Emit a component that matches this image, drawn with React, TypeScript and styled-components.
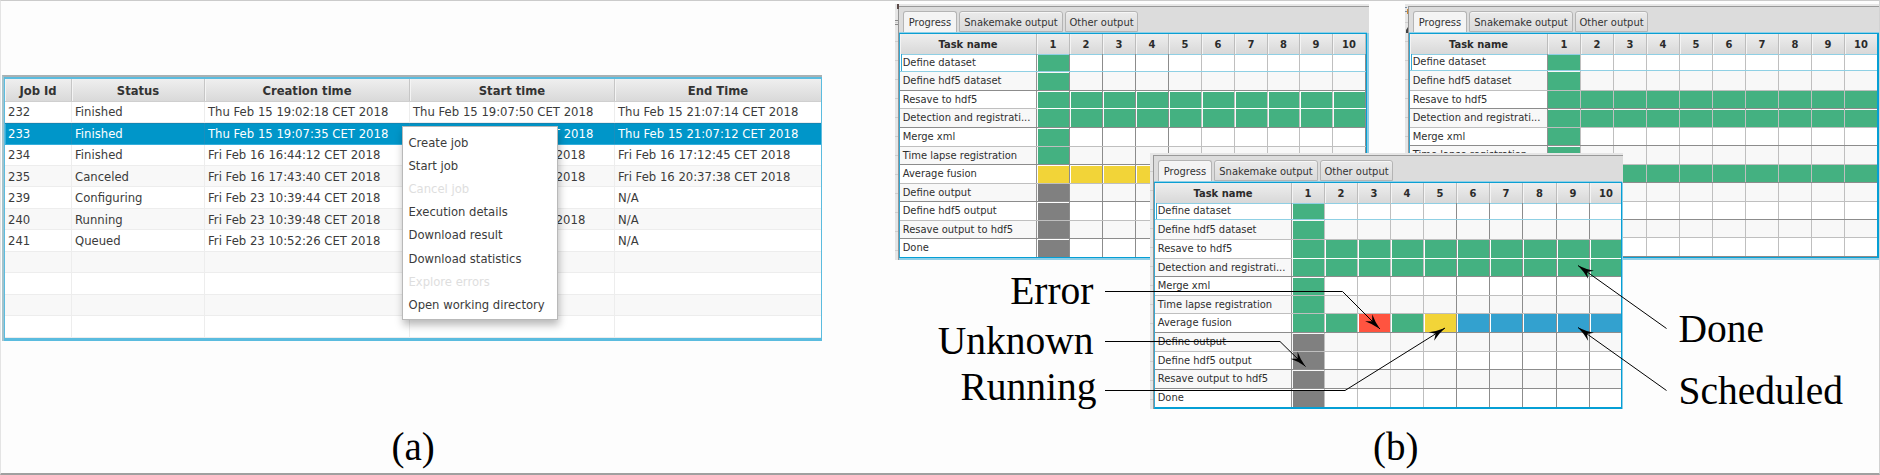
import React from "react";
import styled, { createGlobalStyle, css } from "styled-components";

const GlobalStyle = createGlobalStyle`
  * { box-sizing: border-box; }
  body { margin: 0; background: #fdfdfd; }
`;

const Figure = styled.main`
  display: flex;
  width: 1880px;
  height: 475px;
  overflow: hidden;
  background: #fdfdfd;
  border-top: 1px solid #cbcbcb;
  border-left: 1px solid #e4e4e4;
  border-right: 1px solid #d2d2d2;
  border-bottom: 2px solid #a0a0a0;
  font-family: "DejaVu Sans", Verdana, sans-serif;
  color: #333;
`;

const JobPanel = styled.section`
  position: relative;
  display: flex;
  flex-direction: column;
  width: 824px;
  flex: none;
  padding: 74px 0 0 1px;
`;

const Caption = styled.div<{ $x: number }>`
  margin-top: auto;
  padding-left: ${(p) => p.$x}px;
  height: 48px;
  font: 39px/44px "Liberation Serif", "Times New Roman", serif;
  color: #000;
`;

/* ---------- job table ---------- */

const JobTable = styled.div`
  width: 820px;
  height: 266px;
  border-top: 2px solid #a9b1b3;
  border-left: 2px solid #a3c3cc;
`;

const JobFrame = styled.div`
  height: 264px;
  border: solid #5bbcdf;
  border-width: 2px 1px 3px 1px;
  background: #fff;
  overflow: hidden;
`;

const jobColumns = css`
  display: grid;
  grid-template-columns: 67px 133px 205px 205px 1fr;
`;

const JobHeader = styled.div`
  ${jobColumns}
  height: 22.7px;
  background: linear-gradient(#efefef, #d9d9d9);
  border-bottom: 1px solid #cfcfcf;
  font-size: 11.6px;
  font-weight: bold;
`;

const JobHeading = styled.div`
  display: flex;
  align-items: center;
  justify-content: center;
  border-right: 1px solid #c6c6c6;
  box-shadow: inset 1px 0 #f4f4f4;
  padding-top: 3px;
  &:last-child { border-right: 0; }
`;

const JobRow = styled.div<{ $odd: boolean; $selected: boolean }>`
  ${jobColumns}
  height: 21.45px;
  font-size: 11.65px;
  white-space: pre;
  color: ${(p) => (p.$selected ? "#fff" : "#3b3b3b")};
  background: ${(p) => (p.$selected ? "#0096c9" : p.$odd ? "#f8f8f8" : "#fff")};
  border-bottom: 1px solid ${(p) => (p.$selected ? "#35aedb" : "#ededed")};
  box-shadow: ${(p) => (p.$selected ? "inset 0 1px #1286b4, inset 1px 0 #35aedb" : "none")};
`;

const JobCell = styled.div<{ $selected: boolean }>`
  display: flex;
  align-items: center;
  padding: 1px 0 0 3px;
  border-right: 1px solid ${(p) => (p.$selected ? "#1a8fbd" : "#ededed")};
  &:last-child { border-right: 0; }
`;

const Menu = styled.div`
  position: absolute;
  left: 401px;
  top: 125px;
  width: 156px;
  height: 194px;
  padding: 4px 0 0 5.5px;
  background: #fff;
  border: 1px solid #b9b9b9;
  box-shadow: 1px 5px 8px rgba(0, 0, 0, 0.28);
`;

const MenuItem = styled.div<{ $disabled?: boolean }>`
  display: flex;
  align-items: center;
  height: 23.2px;
  font-size: 11.6px;
  white-space: nowrap;
  color: ${(p) => (p.$disabled ? "#dedede" : "#3b3b3b")};
`;

/* ---------- progress windows ---------- */

const Canvas = styled.section`
  position: relative;
  display: flex;
  flex-direction: column;
  flex: 1;
`;

const Window = styled.div<{ $x: number; $y: number; $w: number }>`
  position: absolute;
  left: ${(p) => p.$x - 825}px;
  top: ${(p) => p.$y - 1}px;
  width: ${(p) => p.$w}px;
  height: 256px;
  padding-left: 3px;
  padding-top: 2px;
  background: repeating-linear-gradient(#e6e6e6 0 18px, #cfcfcf 18px 19px);
  background-color: #e6e6e6;
`;

const Chrome = styled.div`
  height: 254px;
  border-left: 1px solid #969696;
  border-top: 1px solid #999;
  background: #dcdcdc;
  display: flex;
  flex-direction: column;
`;

const Tabs = styled.div`
  display: flex;
  align-items: flex-end;
  gap: 2px;
  height: 26px;
  padding: 0 0 1px 4px;
`;

const Tab = styled.div<{ $w: number; $active?: boolean }>`
  display: flex;
  align-items: center;
  justify-content: center;
  width: ${(p) => p.$w}px;
  height: 21px;
  padding-top: 1px;
  font-size: 9.95px;
  white-space: nowrap;
  color: #333;
  border: 1px solid #b4b4b4;
  border-bottom: ${(p) => (p.$active ? "0" : "1px solid #b4b4b4")};
  border-radius: 3px 3px 0 0;
  background: ${(p) => (p.$active ? "#f4f4f4" : "linear-gradient(#ebebeb, #dadada)")};
  box-shadow: inset 0 1px #f6f6f6;
`;

type RightEdge = "soft" | "flat" | "thin";

const Grid = styled.div<{ $right: RightEdge; $deepBottom: boolean }>`
  flex: 1;
  overflow: hidden;
  background: #fff;
  border-top: 1px solid #0b9fd3;
  border-left: 1px solid #35a8d3;
  border-bottom: ${(p) => (p.$deepBottom ? 2 : 1)}px solid #059fd5;
  border-right: ${(p) => (p.$right === "flat" ? 2 : 1)}px solid #059fd5;
  box-shadow: 0 -1px #8fcfe6;
`;

const Edge = styled.div<{ $right: RightEdge; $deepBottom: boolean }>`
  flex: 1;
  display: flex;
  min-height: 0;
  border-right: ${(p) => (p.$right === "soft" ? 2 : p.$right === "thin" ? 1 : 0)}px solid #8fcfe8;
  border-bottom: ${(p) => (p.$deepBottom ? 0 : 2)}px solid #8fcfe8;
`;

const HeadRow = styled.div`
  display: flex;
  height: 20px;
  background: linear-gradient(#eee, #d8d8d8);
  font-size: 9.95px;
  font-weight: bold;
  color: #2b2b2b;
`;

const HeadCell = styled.div<{ $w: number }>`
  display: flex;
  flex: none;
  align-items: center;
  justify-content: center;
  width: ${(p) => p.$w}px;
  border-right: 1px solid #bcbcbc;
  box-shadow: inset 1px 0 #f4f4f4;
`;

const TaskRow = styled.div<{ $h: number; $line: string; $odd: boolean; $focus: boolean }>`
  display: flex;
  height: ${(p) => p.$h}px;
  background: ${(p) => (p.$odd ? "#f8f8f8" : "#fff")};
  border-bottom: 1px solid ${(p) => p.$line};
  box-shadow: ${(p) => (p.$focus ? "inset 0 1px #8fcfe4" : "none")};
`;

const TaskName = styled.div<{ $w: number; $focus: boolean }>`
  display: flex;
  flex: none;
  align-items: center;
  width: ${(p) => p.$w}px;
  padding: 0 0 0 2.7px;
  font-size: 9.95px;
  line-height: 12px;
  white-space: nowrap;
  color: #2e2e2e;
  border-right: 1px solid #929292;
  box-shadow: ${(p) => (p.$focus ? "inset 1px 0 #fff, inset 2px 0 #35a8d3" : "none")};
`;

const Cell = styled.div<{ $w: number; $line: string; $fill?: string; $top: boolean; $left: boolean; $under: boolean }>`
  flex: none;
  width: ${(p) => p.$w}px;
  border-right: 1px solid ${(p) => p.$line};
  padding: ${(p) => (p.$top ? 1 : 0)}px 0 0 ${(p) => (p.$left ? 1 : 0)}px;
  background: ${(p) => p.$fill || "transparent"} content-box;
  box-shadow: ${(p) => (p.$under ? "0 1px #fff" : "none")};
`;

const Notes = styled.svg`
  position: absolute;
  left: -825px;
  top: -1px;
  width: 1880px;
  height: 475px;
  pointer-events: none;
`;

const Note = styled.div<{ $x: number; $base: number; $end?: boolean }>`
  position: absolute;
  top: ${(p) => p.$base - 36}px;
  ${(p) => (p.$end ? `right: ${1879 - p.$x}px;` : `left: ${p.$x - 825}px;`)}
  font: 39.5px/44px "Liberation Serif", "Times New Roman", serif;
  color: #000;
`;

const D = "#8c8c8c";
const L = "#bfbfbf";
const B = "#8fd0e4";
const G = "#44b181";
const Y = "#f2d438";
const R = "#ff5440";
const S = "#33a1cf";
const U = "#808080";

const jobs = [
  ["232", "Finished", "Thu Feb 15 19:02:18 CET 2018", "Thu Feb 15 19:07:50 CET 2018", "Thu Feb 15 21:07:14 CET 2018"],
  ["233", "Finished", "Thu Feb 15 19:07:35 CET 2018", "Thu Feb 15 19:07:52 CET 2018", "Thu Feb 15 21:07:12 CET 2018"],
  ["234", "Finished", "Fri Feb 16 16:44:12 CET 2018", "Fri Feb 16 16:44:30 CET 2018", "Fri Feb 16 17:12:45 CET 2018"],
  ["235", "Canceled", "Fri Feb 16 17:43:40 CET 2018", "Fri Feb 16 17:44:02 CET 2018", "Fri Feb 16 20:37:38 CET 2018"],
  ["239", "Configuring", "Fri Feb 23 10:39:44 CET 2018", "N/A", "N/A"],
  ["240", "Running", "Fri Feb 23 10:39:48 CET 2018", "Fri Feb 23 10:40:10 CET 2018", "N/A"],
  ["241", "Queued", "Fri Feb 23 10:52:26 CET 2018", "N/A", "N/A"],
  ["", "", "", "", ""],
  ["", "", "", "", ""],
  ["", "", "", "", ""],
  ["", "", "", "", ""],
];

const menu: [string, boolean][] = [
  ["Create job", false],
  ["Start job", false],
  ["Cancel job", true],
  ["Execution details", false],
  ["Download result", false],
  ["Download statistics", false],
  ["Explore errors", true],
  ["Open working directory", false],
];

const tasks = [
  "Define dataset",
  "Define hdf5 dataset",
  "Resave to hdf5",
  "Detection and registrati...",
  "Merge xml",
  "Time lapse registration",
  "Average fusion",
  "Define output",
  "Define hdf5 output",
  "Resave output to hdf5",
  "Done",
];

const all = (c: string) => Array<string>(10).fill(c);

interface WindowSpec {
  x: number;
  y: number;
  w: number;
  right: RightEdge;
  deepBottom: boolean;
  gap: boolean;
  name: number;
  cols: number[];
  colLines: string[];
  rows: number[];
  rowLines: string[];
  fusion: string[];
  tail: string;
}

const windows: WindowSpec[] = [
  {
    x: 895, y: 4, w: 474, right: "soft", deepBottom: false, gap: true,
    name: 137,
    cols: [33, 33, 33, 33, 33, 33, 33, 32, 33, 33],
    colLines: [D, D, D, D, L, L, L, L, L, D],
    rows: [18, 19, 18, 19, 19, 18, 19, 18, 19, 18, 19],
    rowLines: [B, D, L, D, L, D, L, D, L, D, D],
    fusion: all(Y), tail: U,
  },
  {
    x: 1405, y: 4, w: 474, right: "flat", deepBottom: false, gap: false,
    name: 138,
    cols: all("").map(() => 33),
    colLines: all(L),
    rows: [17, 20, 18, 19, 18, 19, 18, 19, 18, 18, 19],
    rowLines: [B, L, D, L, D, L, D, L, D, L, D],
    fusion: all(G), tail: G,
  },
  {
    x: 1150, y: 153, w: 473, right: "thin", deepBottom: true, gap: true,
    name: 137,
    cols: [33, 33, 33, 33, 33, 33, 33, 34, 33, 33],
    colLines: [L, L, L, L, D, D, D, D, D, D],
    rows: [17, 20, 19, 18, 19, 18, 19, 19, 18, 19, 19],
    rowLines: [B, L, L, D, L, L, D, L, D, D, D],
    fusion: [G, G, R, G, Y, S, S, S, S, S], tail: U,
  },
];

function fillFor(spec: WindowSpec, row: number, col: number): string | undefined {
  if (row === 2 || row === 3) return G;
  if (row === 6) return spec.fusion[col];
  if (col > 0) return undefined;
  return row < 6 ? G : spec.tail;
}

function ProgressWindow({ spec }: { spec: WindowSpec }) {
  return (
    <Window $x={spec.x} $y={spec.y} $w={spec.w}>
      <Chrome>
        <Tabs>
          <Tab $w={54} $active>Progress</Tab>
          <Tab $w={104}>Snakemake output</Tab>
          <Tab $w={73}>Other output</Tab>
        </Tabs>
        <Edge $right={spec.right} $deepBottom={spec.deepBottom}>
          <Grid $right={spec.right} $deepBottom={spec.deepBottom}>
            <HeadRow>
              <HeadCell $w={spec.name}>Task name</HeadCell>
              {spec.cols.map((w, i) => (
                <HeadCell key={i} $w={w}>{i + 1}</HeadCell>
              ))}
            </HeadRow>
            {tasks.map((task, r) => (
              <TaskRow key={task} $h={spec.rows[r]} $line={spec.rowLines[r]} $odd={r % 2 === 1} $focus={r === 0}>
                <TaskName $w={spec.name} $focus={r === 0}>{task}</TaskName>
                {spec.cols.map((w, c) => (
                  <Cell
                    key={c}
                    $w={w}
                    $line={spec.colLines[c]}
                    $fill={fillFor(spec, r, c)}
                    $top={r === 0 || spec.rowLines[r - 1] !== L}
                    $left={spec.gap}
                    $under={spec.gap && r === 2}
                  />
                ))}
              </TaskRow>
            ))}
          </Grid>
        </Edge>
      </Chrome>
    </Window>
  );
}

const arrows = [
  { points: [[1105, 291.5], [1342.5, 291.5], [1380, 329]] },
  { points: [[1105, 341.5], [1280, 341.5], [1305.5, 366.5]] },
  { points: [[1105, 390.5], [1345, 390.5], [1445, 328]] },
  { points: [[1666.5, 328.5], [1578, 265.5]] },
  { points: [[1666.5, 390.5], [1578, 327.5]] },
];

function Arrow({ points }: { points: number[][] }) {
  const [tx, ty] = points[points.length - 1];
  const [px, py] = points[points.length - 2];
  const angle = (Math.atan2(ty - py, tx - px) * 180) / Math.PI;
  return (
    <g>
      <polyline points={points.map((p) => p.join(",")).join(" ")} fill="none" stroke="#000" strokeWidth="1" />
      <path d="M0 0Q-9 -1.6 -16 -5L-11 0L-16 5Q-9 1.6 0 0Z" transform={`translate(${tx} ${ty}) rotate(${angle})`} />
    </g>
  );
}

export default function App() {
  return (
    <>
      <GlobalStyle />
      <Figure>
        <JobPanel>
          <JobTable>
            <JobFrame>
              <JobHeader>
                {["Job Id", "Status", "Creation time", "Start time", "End Time"].map((h) => (
                  <JobHeading key={h}>{h}</JobHeading>
                ))}
              </JobHeader>
              {jobs.map((job, r) => (
                <JobRow key={r} $odd={r % 2 === 1} $selected={r === 1}>
                  {job.map((value, c) => (
                    <JobCell key={c} $selected={r === 1}>{value}</JobCell>
                  ))}
                </JobRow>
              ))}
            </JobFrame>
          </JobTable>
          <Menu>
            {menu.map(([label, disabled]) => (
              <MenuItem key={label} $disabled={disabled}>{label}</MenuItem>
            ))}
          </Menu>
          <Caption $x={389.5}>(a)</Caption>
        </JobPanel>
        <Canvas>
          {windows.map((spec) => (
            <ProgressWindow key={spec.x} spec={spec} />
          ))}
          <Note $x={1093.5} $base={304} $end>Error</Note>
          <Note $x={1093.5} $base={353.5} $end>Unknown</Note>
          <Note $x={1096.5} $base={399.5} $end>Running</Note>
          <Note $x={1678.5} $base={341.5}>Done</Note>
          <Note $x={1678.5} $base={404}>Scheduled</Note>
          <Notes viewBox="0 0 1880 475">
            <path d="M897 4h2v5h-2z" fill="#5b4a48" />
            <path d="M895 20h3v1h-3zM895 24h3v1h-3z" fill="#888" />
            <path d="M1405 7h2v1h-2zM1405 11h2v1h-2z" fill="#7a8da0" />
            <path d="M1407 9h1v5h-1z" fill="#d08a35" />
            <path d="M1406 30l2 -3v6h-2z" fill="#444" />
            {arrows.map((a, i) => (
              <Arrow key={i} points={a.points} />
            ))}
          </Notes>
          <Caption $x={548}>(b)</Caption>
        </Canvas>
      </Figure>
    </>
  );
}
